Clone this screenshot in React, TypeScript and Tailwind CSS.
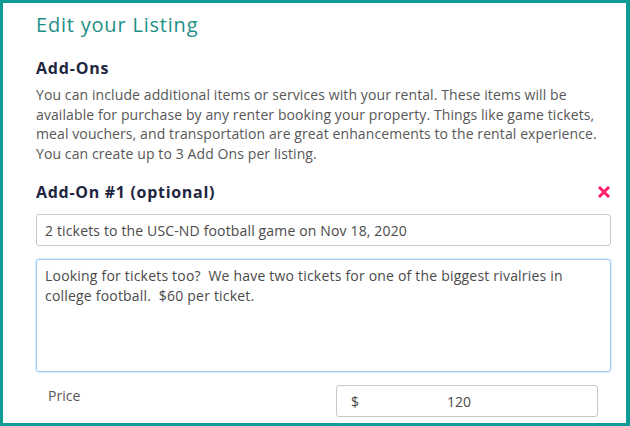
import React, { useState } from "react";

const App = () => {
  const [title, setTitle] = useState("2 tickets to the USC-ND football game on Nov 18, 2020");
  const [desc, setDesc] = useState(
    "Looking for tickets too?  We have two tickets for one of the biggest rivalries in college football.  $60 per ticket."
  );
  const [price, setPrice] = useState("120");

  return (
    <div
      className="w-[630px] h-[426px] overflow-hidden bg-white border-t-[3px] border-l-[3px] border-r-4 border-b-[3px] border-[#0f9c96]"
      style={{ fontFamily: '"Open Sans", "Liberation Sans", sans-serif' }}
    >
      <div className="pl-[33px] pr-[15px] pt-[8px]">
        <h1 className="text-[20px] leading-[28px] tracking-[0.8px] text-[#1d8f86]">Edit your Listing</h1>

        <h2 className="mt-[18px] text-[16px] leading-[22px] tracking-[0.8px] font-bold text-[#1f2640]">Add-Ons</h2>
        <p className="mt-[6px] text-[14px] leading-[19.5px] text-[#575757] tracking-[0.1px]">
          You can include additional items or services with your rental. These items will be
          available for purchase by any renter booking your property. Things like game tickets,
          meal vouchers, and transportation are great enhancements to the rental experience.
          You can create up to 3 Add Ons per listing.
        </p>

        <div className="mt-[18px] flex items-center justify-between">
          <h3 className="text-[16px] leading-[22px] tracking-[0.7px] font-bold text-[#1f2640]">Add-On #1 (optional)</h3>
          <button className="mr-[1px] text-[#ff1e6a]" aria-label="Remove add-on">
            <svg width="12" height="12" viewBox="0 0 12 12">
              <path d="M2 2 L10 10 M10 2 L2 10" stroke="currentColor" strokeWidth="3" strokeLinecap="square" />
            </svg>
          </button>
        </div>

        <input
          value={title}
          onChange={(e) => setTitle(e.target.value)}
          className="mt-[11px] block w-full h-[32px] px-[8px] rounded-[3px] border border-[#c8c8c8] text-[14px] tracking-[0.15px] text-[#4a4a4a] outline-none"
        />

        <textarea
          value={desc}
          onChange={(e) => setDesc(e.target.value)}
          className="mt-[13px] block w-full h-[113px] px-[8px] pt-[6px] rounded-[3px] border border-[#9cc8f5] shadow-[0_0_3px_#b8d8fb] text-[14px] leading-[20px] tracking-[0.2px] text-[#4a4a4a] outline-none resize-none"
        />

        <div className="mt-[13px] flex items-start">
          <span className="ml-[12px] text-[14px] text-[#575757]">Price</span>
          <div className="ml-auto mr-[13px] w-[262px] h-[32px] flex items-center rounded-[3px] border border-[#c8c8c8] px-[14px] text-[14px] text-[#4a4a4a]">
            <span>$</span>
            <input
              value={price}
              onChange={(e) => setPrice(e.target.value)}
              className="w-[200px] text-center outline-none bg-transparent"
            />
          </div>
        </div>
      </div>
    </div>
  );
};

export default App;
